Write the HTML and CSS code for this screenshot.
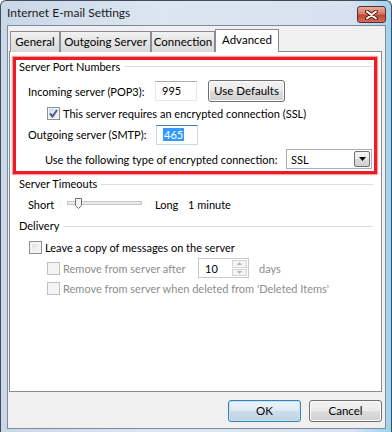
FILE: index.html
```html
<!DOCTYPE html>
<html lang="en">
<head>
    <meta charset="UTF-8">
    <title>Internet E-mail Settings</title>
    <link rel="stylesheet" href="styles.css">
</head>
<body>
    <div class="window">
        <div class="titlebar">
            <span class="title">Internet E-mail Settings</span>
            <div class="close-btn">
                <svg width="15" height="10" viewBox="0 0 15 10">
                    <path d="M3 1.5 L12 8.5 M12 1.5 L3 8.5" stroke="#5a1c16" stroke-width="4" stroke-linecap="round"/>
                    <path d="M3 1.5 L12 8.5 M12 1.5 L3 8.5" stroke="#ffffff" stroke-width="2" stroke-linecap="round"/>
                </svg>
            </div>
        </div>

        <div class="client">
            <div class="tabs">
                <div class="tab tab-general">General</div>
                <div class="tab tab-outgoing">Outgoing Server</div>
                <div class="tab tab-connection">Connection</div>
                <div class="tab tab-advanced active">Advanced</div>
            </div>

            <div class="panel">
                <div class="highlight">
                    <div class="group-title">Server Port Numbers</div>

                    <div class="row row-incoming">
                        <span class="field-label incoming-label">Incoming server (POP3):</span>
                        <div class="textbox port-box">995</div>
                        <div class="btn defaults-btn">Use Defaults</div>
                    </div>

                    <div class="row row-ssl">
                        <span class="checkbox checked">
                            <svg width="9" height="9" viewBox="0 0 9 9">
                                <path d="M1 4.5 L3.5 7.5 L8 1" fill="none" stroke="#4a5f8c" stroke-width="2"/>
                            </svg>
                        </span>
                        <span class="check-label">This server requires an encrypted connection (SSL)</span>
                    </div>

                    <div class="row row-outgoing">
                        <span class="field-label outgoing-label">Outgoing server (SMTP):</span>
                        <div class="textbox port-box focused"><span class="selected-text">465</span></div>
                    </div>

                    <div class="row row-encryption">
                        <span class="field-label encryption-label">Use the following type of encrypted connection:</span>
                        <div class="combo">
                            <span class="combo-value">SSL</span>
                            <span class="combo-arrow">
                                <svg width="7" height="4" viewBox="0 0 7 4"><path d="M0 0 H7 L3.5 4 Z" fill="#000"/></svg>
                            </span>
                        </div>
                    </div>
                </div>

                <div class="section">
                    <div class="group-title">Server Timeouts</div>
                    <div class="row row-timeout">
                        <span class="short-label">Short</span>
                        <svg class="slider" width="76" height="14" viewBox="0 0 76 14">
                            <rect x="0.5" y="4.5" width="74" height="3" fill="#e7eaea" stroke="#c6c8c8"/>
                            <path d="M8.5 1.5 H14.5 V8.5 L11.5 11.5 L8.5 8.5 Z" fill="#f4f4f4" stroke="#6f6f6f"/>
                        </svg>
                        <span class="long-label">Long</span>
                        <span class="timeout-value">1 minute</span>
                    </div>

                    <div class="group-title delivery-title">Delivery</div>
                    <div class="row row-leave">
                        <span class="checkbox"></span>
                        <span class="check-label">Leave a copy of messages on the server</span>
                    </div>
                    <div class="row row-remove-after">
                        <span class="checkbox disabled"></span>
                        <span class="check-label disabled-text remove-after-label">Remove from server after</span>
                        <div class="spinbox">
                            <span class="spin-value">10</span>
                            <span class="spin-buttons">
                                <span class="spin-up">
                                    <svg width="5" height="3" viewBox="0 0 5 3"><path d="M0 3 L2.5 0 L5 3 Z" fill="#b4b4b4"/></svg>
                                </span>
                                <span class="spin-down">
                                    <svg width="5" height="3" viewBox="0 0 5 3"><path d="M0 0 H5 L2.5 3 Z" fill="#b4b4b4"/></svg>
                                </span>
                            </span>
                        </div>
                        <span class="disabled-text days-label">days</span>
                    </div>
                    <div class="row row-remove-deleted">
                        <span class="checkbox disabled"></span>
                        <span class="check-label disabled-text">Remove from server when deleted from 'Deleted Items'</span>
                    </div>
                </div>
            </div>

            <div class="dialog-buttons">
                <div class="btn ok-btn">OK</div>
                <div class="btn cancel-btn">Cancel</div>
            </div>
        </div>
    </div>
</body>
</html>
```

FILE: styles.css
```css
* {
    box-sizing: border-box;
}
body {
    margin: 0;
    font-family: Lato, "Noto Sans", sans-serif;
    font-size: 11px;
    color: #000;
    background: #fff;
}
.window {
    width: 392px;
    height: 432px;
    border: 1px solid #434d5a;
    border-bottom: none;
    border-radius: 6px 6px 0 0;
    background: linear-gradient(90deg, #c9d7e8 0%, #dce6f2 40%, #d6e2f0 90%, #9fd3ef 100%);
    overflow: hidden;
}
.titlebar {
    height: 24px;
    display: flex;
    justify-content: space-between;
    align-items: flex-start;
    padding: 0 5px 0 6px;
}
.title {
    font-size: 12px;
    line-height: 24px;
    color: #1a1a1a;
}
.close-btn {
    width: 29px;
    height: 17px;
    margin-top: 5px;
    border: 1px solid #5e2b2b;
    border-radius: 3px;
    background: linear-gradient(#e9ab9f 0%, #d67a68 45%, #c2452f 55%, #d3705a 100%);
    display: flex;
    align-items: center;
    justify-content: center;
}
.client {
    height: 404px;
    margin: 0 5px 0 6px;
    border: 1px solid #7d8a9c;
    background: #f0f0f0;
}

/* tabs */
.tabs {
    display: flex;
    align-items: flex-end;
    height: 26px;
    padding: 4px 0 0 2px;
    margin-bottom: -1px;
    position: relative;
    z-index: 1;
}
.tab {
    height: 21px;
    border: 1px solid #898c95;
    border-bottom: none;
    background: linear-gradient(#f2f2f2, #e3e3e3 50%, #d9d9d9);
    font-size: 11.5px;
    line-height: 20px;
    text-align: center;
    white-space: nowrap;
}
.tab-general { width: 50px; }
.tab-outgoing { width: 91px; }
.tab-connection { width: 64px; }
.tab-advanced { width: 64px; }
.tab.active {
    height: 23px;
    background: #fff;
    line-height: 19px;
}
.panel {
    width: 373px;
    height: 341px;
    margin-left: 1px;
    border: 1px solid #898c95;
    background: #fff;
}

/* red annotation frame */
.highlight {
    margin: 5px 4px 0 3px;
    border: 3px solid #ec1c24;
    box-shadow: 0 0 1px 1px #f5a0a0;
    padding: 0 1px 0 3px;
    height: 117px;
}
.group-title {
    display: flex;
    align-items: center;
    gap: 4px;
    line-height: 13px;
}
.group-title::after {
    content: '';
    flex: 1;
    border-top: 1px solid #d5dfe5;
}
.row {
    display: flex;
    align-items: center;
    white-space: nowrap;
}
.row-incoming {
    height: 22px;
    margin-top: 7px;
    padding-left: 9px;
}
.row-ssl {
    height: 22px;
    padding-left: 28px;
}
.row-outgoing {
    height: 21px;
    padding-left: 9px;
}
.row-encryption {
    height: 22px;
    margin-top: 3px;
    padding-left: 26px;
}
.incoming-label { width: 127px; }
.outgoing-label { width: 128px; }
.encryption-label { width: 241px; }

.textbox {
    height: 20px;
    background: #fff;
    border: 1px solid #e3e9ef;
    border-top-color: #abadb3;
    padding-left: 6px;
    line-height: 18px;
}
.port-box {
    width: 42px;
}
.textbox.focused {
    border-color: #c5daed;
    border-top-color: #3d7bad;
}
.selected-text {
    background: #3399ff;
    color: #fff;
    padding: 0 1px;
}
.btn {
    height: 22px;
    border: 1px solid #707070;
    border-radius: 3px;
    background: linear-gradient(#f2f2f2 0%, #ebebeb 50%, #dddddd 51%, #cfcfcf 100%);
    box-shadow: inset 0 0 0 1px #fbfbfb;
    text-align: center;
    line-height: 20px;
    font-size: 11.5px;
}
.defaults-btn {
    width: 77px;
    margin-left: 11px;
}
.checkbox {
    width: 13px;
    height: 13px;
    border: 1px solid #8e8f8f;
    background: linear-gradient(135deg, #dcdcdc, #fbfbfb);
    box-shadow: inset 0 0 0 2px #f4f4f4;
    display: flex;
    align-items: center;
    justify-content: center;
    flex-shrink: 0;
}
.checkbox.checked {
    background: linear-gradient(135deg, #cdd9ec, #f4f6fa);
    box-shadow: inset 0 0 0 1px #f4f4f4;
}
.checkbox.disabled {
    border-color: #c0c0c0;
    background: #f4f4f4;
    box-shadow: none;
}
.check-label {
    margin-left: 3px;
}
.combo {
    width: 86px;
    height: 20px;
    border: 1px solid #abadb3;
    background: #fff;
    display: flex;
    align-items: center;
    justify-content: space-between;
    padding: 0 1px 0 4px;
}
.combo-arrow {
    width: 16px;
    height: 16px;
    border: 1px solid #707070;
    border-radius: 2px;
    background: linear-gradient(#f2f2f2, #ebebeb 50%, #dddddd 51%, #cfcfcf);
    display: flex;
    align-items: center;
    justify-content: center;
}

/* lower sections */
.section {
    padding: 3px 8px 0 9px;
}
.section .group-title {
    line-height: 14px;
}
.row-timeout {
    height: 18px;
    margin-top: 4px;
    padding-left: 9px;
}
.short-label {
    width: 39px;
}
.slider {
    display: block;
}
.long-label {
    margin-left: 12px;
    width: 33px;
}
.delivery-title {
    margin-top: 6px;
}
.row-leave {
    height: 18px;
    margin-top: 5px;
    padding-left: 10px;
}
.row-remove-after {
    height: 20px;
    margin-top: 2px;
    padding-left: 28px;
}
.row-remove-deleted {
    height: 18px;
    margin-top: 1px;
    padding-left: 28px;
}
.disabled-text {
    color: #8d8d8d;
}
.remove-after-label {
    width: 135px;
}
.spinbox {
    width: 51px;
    height: 20px;
    border: 1px solid #c9c9c9;
    background: #fff;
    display: flex;
    justify-content: space-between;
    padding: 1px;
}
.spin-value {
    padding-left: 5px;
    line-height: 17px;
}
.spin-buttons {
    width: 15px;
    display: flex;
    flex-direction: column;
    gap: 1px;
}
.spin-up, .spin-down {
    flex: 1;
    border: 1px solid #d4d4d4;
    background: #f4f4f4;
    display: flex;
    align-items: center;
    justify-content: center;
}
.days-label {
    margin-left: 10px;
}

/* bottom buttons */
.dialog-buttons {
    display: flex;
    justify-content: flex-end;
    gap: 8px;
    margin: 8px 3px 0 0;
}
.ok-btn, .cancel-btn {
    width: 73px;
}
.ok-btn {
    border-color: #3c7fb1;
    background: linear-gradient(#eaf3fa 0%, #dde9f3 50%, #cbdbe9 51%, #c1d3e3 100%);
    box-shadow: inset 0 0 0 1px #bfe3f8;
}
```
